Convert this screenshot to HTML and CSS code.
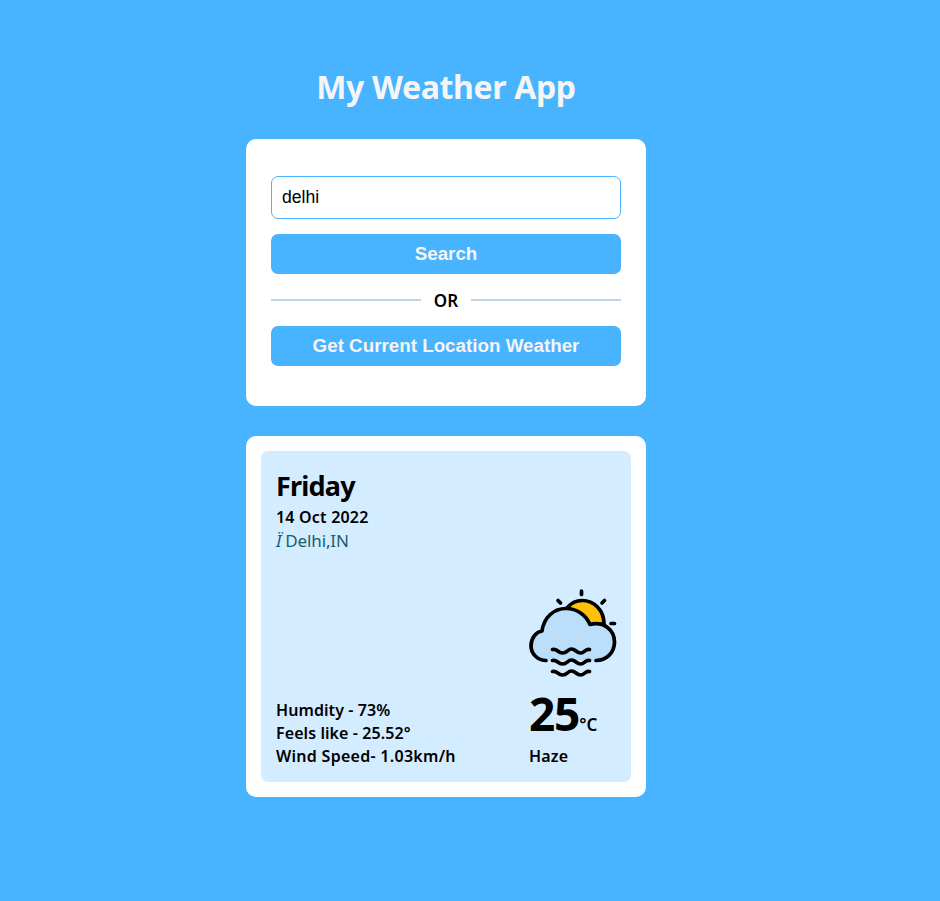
FILE: index.html
```html
<!DOCTYPE html>
<html lang="en">
<head>
<meta charset="utf-8">
<title>My Weather App</title>
<link rel="stylesheet" href="styles.css">
</head>
<body>
<main class="app">
  <h1 class="title">My Weather App</h1>
  <section class="card search">
    <input class="city" type="text" value="delhi">
    <button class="btn">Search</button>
    <div class="or"><span class="or-text">OR</span></div>
    <button class="btn">Get Current Location Weather</button>
  </section>
  <section class="card result">
    <div class="weather">
      <header>
        <h2 class="day">Friday</h2>
        <div class="date">14 Oct 2022</div>
        <div class="place"><i class="pin">Ï</i><span>Delhi,IN</span></div>
      </header>
      <div class="bottom">
        <div class="details">
          <div class="humidity">Humdity - 73%</div>
          <div class="feels">Feels like - 25.52°</div>
          <div class="wind">Wind Speed- 1.03km/h</div>
        </div>
        <div class="now">
          <svg class="icon" viewBox="0 0 88 90" fill="none" stroke="#000" stroke-width="3.7" stroke-linecap="round" stroke-linejoin="round">
            <path fill="#ffc107" d="M38 19C42 14 47 11.500 53 11.500C65 11.500 75 21 75 35L62 36Z"/>
            <path fill="#bbdefb" stroke="none" d="M17 71.500C9 71.500 2 65 2 57C2 49 7 43 13 42C15 28 25 19.500 37 19.500C48 19.500 57 26 61 35.500C75 32 85.500 41 85.500 53C85.500 64 77 71.500 67 71.500Z"/>
            <path d="M17 71.500C9 71.500 2 65 2 57C2 49 7 43 13 42C15 28 25 19.500 37 19.500C48 19.500 57 26 61 35.500C75 32 85.500 41 85.500 53C85.500 64 77 71.500 67 71.500"/>
            <path d="M52.500 2v3.500M29 11.500l2.500 2.500M75.500 11.500l-2.500 2.500M82 34.500h3.500"/>
            <path d="M23.500 60.500c5-1 5 3.500 10 3.500s5-4 9-4s5 4 9 4s5-4.500 9-3.500M23.500 71.500c5-1 5 3.500 10 3.500s5-4 9-4s5 4 9 4s5-4.500 9-3.500M23.500 82.500c5-1 5 3.500 10 3.500s5-4 9-4s5 4 9 4s5-4.500 9-3.500"/>
          </svg>
          <div class="temp"><span class="value">25</span><span class="unit">°C</span></div>
          <div class="state">Haze</div>
        </div>
      </div>
    </div>
  </section>
</main>
</body>
</html>
```
FILE: styles.css
```css
* { box-sizing: border-box; }
body {
  margin: 0;
  min-height: 901px;
  background: #48b3ff;
  color: #000;
  font-family: "Noto Sans", "Open Sans", sans-serif;
}
.app { width: 400px; margin-left: 246px; padding-top: 65px; }
.title {
  margin: 0 0 30px;
  height: 44px;
  line-height: 44px;
  font-size: 32px;
  letter-spacing: -0.35px;
  color: #f5f5f7;
  text-align: center;
  white-space: nowrap;
}
.card { background: #fff; border-radius: 10px; }
.search { height: 267px; padding: 37px 25px 0; }
.city {
  display: block;
  width: 100%;
  height: 43px;
  margin-bottom: 15px;
  padding: 0 10px;
  border: 1px solid #48b3ff;
  border-radius: 7px;
  outline: 0;
  font: 17.600px "Liberation Sans", sans-serif;
}
.btn {
  display: block;
  width: 100%;
  height: 40px;
  padding: 0 0 1px;
  border: 0;
  border-radius: 7px;
  background: #48b3ff;
  color: #f5f5f7;
  font: bold 18.800px "Liberation Sans", sans-serif;
}
.or { display: flex; align-items: center; height: 52px; }
.or::before, .or::after { content: ""; width: 150px; height: 2px; background: #c4d3df; }
.or-text { flex: 1; text-align: center; font-size: 17px; font-weight: 600; }
.result { margin-top: 30px; padding: 15px; }
.weather {
  display: flex;
  flex-direction: column;
  justify-content: space-between;
  height: 331px;
  padding: 18px 15px 14px;
  border-radius: 7px;
  background: #d4ecff;
}
.day { margin: 0 0 3px; font-size: 27px; line-height: 34px; font-weight: 700; letter-spacing: -0.8px; }
.date, .details, .state { font-size: 16px; font-weight: 600; line-height: 23px; letter-spacing: 0.2px; white-space: nowrap; }
.humidity, .feels { letter-spacing: 0.08px; }
.wind { letter-spacing: 0.28px; }
.place { display: flex; gap: 4px; font-size: 17px; line-height: 23px; color: #16606f; font-weight: 400; letter-spacing: -0.15px; }
.bottom { display: flex; justify-content: space-between; align-items: flex-end; }
.now { width: 87px; }
.icon { display: block; width: 88px; height: 90px; margin-bottom: 6px; }
.temp { display: flex; align-items: baseline; height: 60px; line-height: 57px; }
.value { font-size: 46px; font-weight: 700; letter-spacing: -1.2px; }
.unit { font-size: 17px; font-weight: 600; }
```
